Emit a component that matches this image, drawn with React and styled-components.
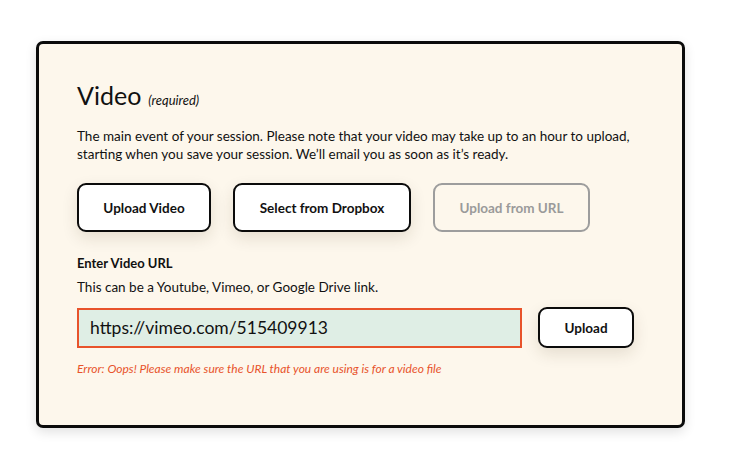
import React from 'react';
import styled, { createGlobalStyle } from 'styled-components';

const GlobalStyle = createGlobalStyle`
  body {
    margin: 0;
    background: #ffffff;
    font-family: 'Lato', 'Liberation Sans', sans-serif;
    color: #111111;
  }
`;

const Page = styled.div`
  width: 732px;
  height: 472px;
  padding: 41px 0 0 36px;
  box-sizing: border-box;
`;

const Card = styled.section`
  width: 649px;
  height: 387px;
  box-sizing: border-box;
  background: #fdf7ec;
  border: 3px solid #0b0b0b;
  border-radius: 7px;
  box-shadow: 0 4px 12px rgba(0, 0, 0, 0.12);
  padding: 35px 38px 0 38px;
`;

const Title = styled.h2`
  margin: 0;
  font-size: 25px;
  font-weight: 400;
  line-height: 32px;
  display: flex;
  align-items: baseline;
  gap: 7px;
`;

const Required = styled.span`
  font-size: 13px;
  font-style: italic;
`;

const Intro = styled.p`
  margin: 11px 0 0;
  font-size: 13.5px;
  line-height: 18px;
  width: 570px;
`;

const ButtonRow = styled.div`
  display: flex;
  gap: 22px;
  margin-top: 20px;
`;

const Button = styled.button`
  height: 49px;
  padding: 0 20px;
  box-sizing: border-box;
  font-family: inherit;
  font-size: 13.5px;
  font-weight: 700;
  color: ${p => (p.disabled ? '#9a9a9a' : '#111111')};
  background: ${p => (p.disabled ? 'transparent' : '#ffffff')};
  border: 2px solid ${p => (p.disabled ? '#9d9d9d' : '#0b0b0b')};
  border-radius: 9px;
  box-shadow: ${p => (p.disabled ? 'none' : '0 6px 16px rgba(60, 40, 10, 0.12)')};
  width: ${p => p.w}px;
`;

const SmallButton = styled(Button)`
  height: 41px;
`;

const Label = styled.div`
  margin-top: 22px;
  font-size: 13px;
  font-weight: 700;
  line-height: 18px;
`;

const Hint = styled.div`
  margin-top: 6px;
  font-size: 13.5px;
  line-height: 18px;
`;

const UrlRow = styled.div`
  display: flex;
  align-items: center;
  gap: 16px;
  margin-top: 11px;
`;

const UrlInput = styled.input`
  width: 445px;
  height: 40px;
  box-sizing: border-box;
  border: 2px solid #e8532b;
  background: #dfeee5;
  padding: 0 11px;
  font-family: inherit;
  font-size: 17.5px;
  color: #111111;
  outline: none;
`;

const ErrorText = styled.div`
  margin-top: 13px;
  font-size: 12px;
  font-style: italic;
  color: #e8532b;
`;

export default function App() {
  return (
    <Page>
      <GlobalStyle />
      <Card>
        <Title>
          Video <Required>(required)</Required>
        </Title>
        <Intro>
          The main event of your session. Please note that your video may take up to an hour to upload,
          starting when you save your session. We’ll email you as soon as it’s ready.
        </Intro>
        <ButtonRow>
          <Button w={134}>Upload Video</Button>
          <Button w={178}>Select from Dropbox</Button>
          <Button w={157} disabled>Upload from URL</Button>
        </ButtonRow>
        <Label>Enter Video URL</Label>
        <Hint>This can be a Youtube, Vimeo, or Google Drive link.</Hint>
        <UrlRow>
          <UrlInput defaultValue="https://vimeo.com/515409913" />
          <SmallButton w={96}>Upload</SmallButton>
        </UrlRow>
        <ErrorText>Error: Oops! Please make sure the URL that you are using is for a video file</ErrorText>
      </Card>
    </Page>
  );
}
